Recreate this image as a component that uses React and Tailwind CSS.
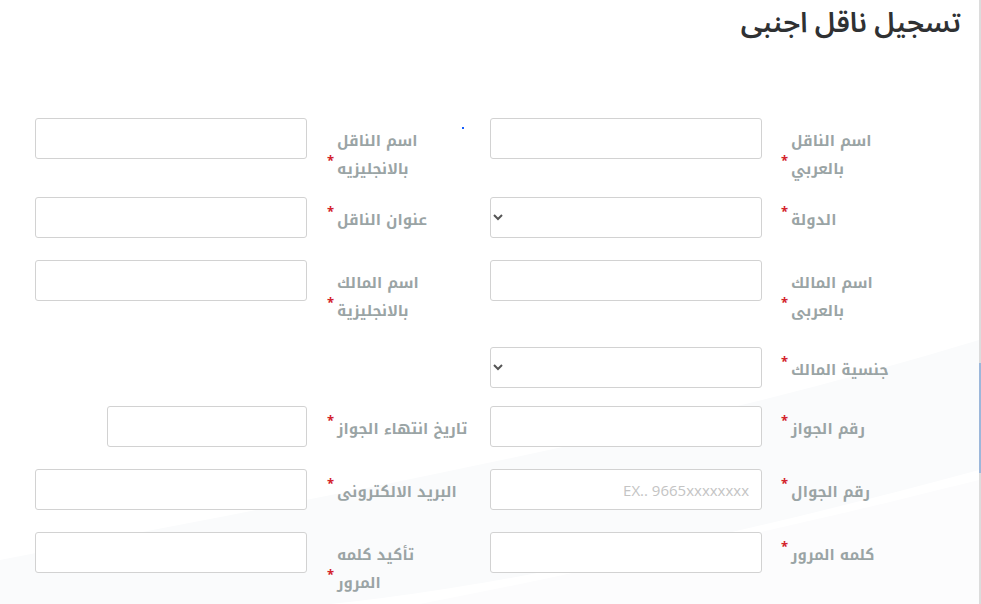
import React from 'react';

const labelFont = { fontFamily: '"Noto Kufi Arabic", "Noto Sans Arabic", "DejaVu Sans", sans-serif' };

const Label = ({ lines, className = '' }) => (
    <div
        className={`pt-[9px] pl-[10px] text-left font-bold text-[15px] leading-[28px] text-[#9aa4a5] whitespace-nowrap ${className}`}
        style={labelFont}
    >
        {lines.map((l, i) => (
            <React.Fragment key={i}>
                {i > 0 && <br />}
                {i === lines.length - 1 ? (
                    <span className="relative">
                        {l}
                        <span className="absolute right-full top-[-8px] mr-[3px] text-[#d3222a] text-[13px]">*</span>
                    </span>
                ) : (
                    l
                )}
            </React.Fragment>
        ))}
    </div>
);

const Field = ({ type = 'input', placeholder, className = 'w-[272px]' }) =>
    type === 'select' ? (
        <select
            dir="rtl"
            className={`h-[41px] ${className} border border-[#d2d2d2] rounded-[3px] bg-white text-[14px] text-[#555] px-2`}
        >
            <option></option>
        </select>
    ) : (
        <input
            dir="rtl"
            placeholder={placeholder}
            className={`h-[41px] ${className} border border-[#d2d2d2] rounded-[3px] bg-white px-3 text-[15px] text-[#555] placeholder:text-[#c4c4c4] outline-none`}
            style={{ fontFamily: '"Open Sans", "Liberation Sans", sans-serif' }}
        />
    );

const rows = [
    { h: 'h-[79px]', l1: ['اسم الناقل', 'بالعربي'], f1: {}, l2: ['اسم الناقل', 'بالانجليزيه'], f2: {} },
    { h: 'h-[63px]', l1: ['الدولة'], f1: { type: 'select' }, l2: ['عنوان الناقل'], f2: {} },
    { h: 'h-[87px]', l1: ['اسم المالك', 'بالعربى'], f1: {}, l2: ['اسم المالك', 'بالانجليزية'], f2: {} },
    { h: 'h-[59px]', l1: ['جنسية المالك'], f1: { type: 'select' } },
    { h: 'h-[63px]', l1: ['رقم الجواز'], f1: {}, l2: ['تاريخ انتهاء الجواز'], f2: { className: 'w-[200px]' } },
    { h: 'h-[63px]', l1: ['رقم الجوال'], f1: { placeholder: 'EX.. 9665xxxxxxxx' }, l2: ['البريد الالكترونى'], f2: {} },
    { h: 'h-[72px]', l1: ['كلمه المرور'], f1: {}, l2: ['تأكيد كلمه', 'المرور'], f2: {} },
];

export default function App() {
    return (
        <div className="flex w-[981px] h-[604px] overflow-hidden bg-white">
            <main dir="rtl" className="relative flex-1 h-full">
                {/* faint background swoosh */}
                <svg className="absolute inset-0 w-full h-full pointer-events-none" viewBox="0 0 979 604" preserveAspectRatio="none">
                    <path d="M0 560 C 300 500, 650 440, 979 340 L 979 470 C 720 540, 480 590, 330 604 L 0 604 Z" fill="#fafbfc" />
                    <path d="M420 604 C 620 565, 820 520, 979 480 L 979 604 Z" fill="#fcfcfd" />
                </svg>

                <div className="relative">
                    <h1
                        className="pr-[18px] pt-[2px] text-[28px] font-semibold leading-[44px] text-[#2f3133]"
                        style={{ fontFamily: '"Noto Sans Arabic", "DejaVu Sans", sans-serif' }}
                    >
                        تسجيل ناقل اجنبى
                    </h1>

                    <div className="mt-[72px] pr-[80px]">
                        {rows.map((r, i) => (
                            <div key={i} className={`flex items-start ${r.h}`}>
                                <Label lines={r.l1} className="w-[118px]" />
                                <div className="w-[272px] mr-[19px] flex">
                                    <Field {...r.f1} />
                                </div>
                                {r.l2 && (
                                    <>
                                        <Label lines={r.l2} className="w-[143px] mr-[20px]" />
                                        <div className="w-[272px] mr-[20px] flex">
                                            <Field {...r.f2} />
                                        </div>
                                    </>
                                )}
                            </div>
                        ))}
                    </div>
                </div>

                <div className="absolute left-[462px] top-[127px] w-[2px] h-[2px] bg-blue-600" />
            </main>

            {/* thin scrollbar at the edge */}
            <div className="w-[2px] h-full bg-[#dcdcdc] flex flex-col">
                <div className="h-[363px]" />
                <div className="h-[110px] bg-[#9cb7da]" />
            </div>
        </div>
    );
}
